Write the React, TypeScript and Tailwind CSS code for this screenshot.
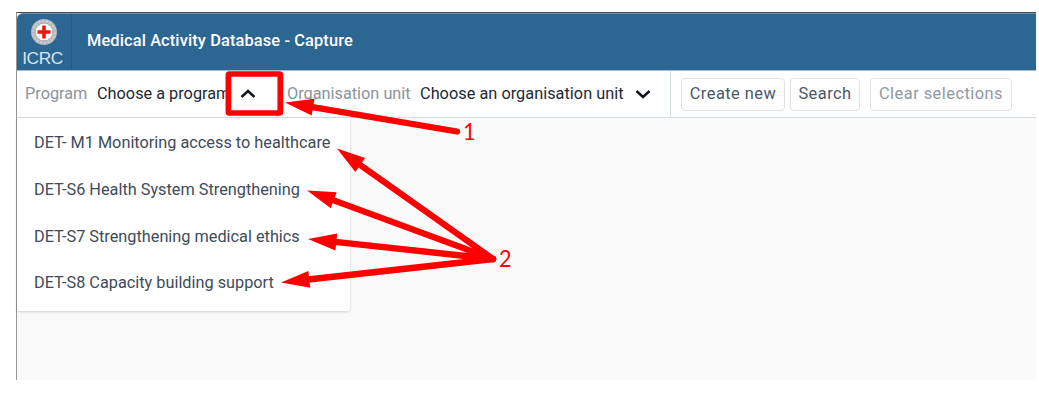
import React from 'react';

const programs = [
  'DET- M1 Monitoring access to healthcare',
  'DET-S6 Health System Strengthening',
  'DET-S7 Strengthening medical ethics',
  'DET-S8 Capacity building support',
];

const arrows = [
  { tip: [285, 102.5], end: [457, 131.5] },
  { tip: [337, 148.5], end: [493, 259] },
  { tip: [307, 190.5], end: [493, 259] },
  { tip: [308, 239], end: [493, 259] },
  { tip: [281, 282.5], end: [493, 259] },
];

function Arrow({ tip, end }: { tip: number[]; end: number[] }) {
  const dx = end[0] - tip[0];
  const dy = end[1] - tip[1];
  const len = Math.hypot(dx, dy);
  const angle = (Math.atan2(dy, dx) * 180) / Math.PI;
  return (
    <g transform={`translate(${tip[0]} ${tip[1]}) rotate(${angle})`}>
      <line x1="25" y1="0" x2={len} y2="0" stroke="#ff0000" strokeWidth="6.3" strokeLinecap="round" />
      <path d="M0 0L28.5 -8.5V8.5Z" fill="#ff0000" />
    </g>
  );
}

function Emblem() {
  return (
    <svg width="28" height="28" viewBox="0 0 28 28" className="block">
      <circle cx="14" cy="14" r="13" fill="#b5b9bc" />
      <circle cx="14" cy="14" r="11" fill="none" stroke="#dcdedf" strokeWidth="2.5" strokeDasharray="2.3 1.5" opacity=".5" />
      <circle cx="14" cy="14" r="8.8" fill="#fff" stroke="#9aa1a6" strokeWidth=".7" />
      <path d="M12.2 7.5h3.6v4.7h4.7v3.6h-4.7v4.7h-3.6v-4.7H7.5v-3.6h4.7z" fill="#ed1710" />
    </svg>
  );
}

function Chevron({ up = false }: { up?: boolean }) {
  return (
    <svg width="16" height="10" viewBox="0 0 16 10" fill="none" stroke="#15191f" strokeWidth="2.5">
      <path d={up ? 'M1.5 8L8 2L14.5 8' : 'M1.5 2L8 8L14.5 2'} />
    </svg>
  );
}

export default function App() {
  return (
    <div className="relative h-[401px] w-[1039px] overflow-hidden bg-white pl-4 pt-3 font-['Roboto',sans-serif] whitespace-nowrap">
      <div className="flex h-[368px] w-[1020px] flex-col border-l border-t border-l-[#969696] border-t-[#4c4c4c] bg-[#fafafa]">
        <div className="shrink-0 bg-white">
          <header className="flex h-[58px] rounded-tl-md border-t border-b border-t-[#6c91af] border-b-[#a3bdd1] bg-[#2c6693] text-white">
            <div className="flex w-[55px] flex-col items-center border-r border-[#245b86] pt-[4px]">
              <Emblem />
              <span className="mt-[2px] mr-[3px] font-['Liberation_Sans',sans-serif] text-[17.3px] leading-[20px] tracking-[-0.4px] text-[#d9e5ee]">ICRC</span>
            </div>
            <h1 className="pl-[15px] text-[16.4px] leading-[53px] font-medium tracking-[0.12px]">Medical Activity Database - Capture</h1>
          </header>
        </div>

        <div className="flex h-[47px] shrink-0 items-center border-b border-[#d5dde5] bg-white text-[16.3px]">
          <div className="flex h-full w-[261px] items-center border-r border-[#d5dde5] pl-[8px]">
            <span className="w-[72px] text-[#8b939c]">Program</span>
            <span className="w-[143px] text-[#212934]">Choose a program</span>
            <Chevron up />
          </div>
          <div className="flex h-full w-[393px] items-center border-r border-[#d5dde5] pl-[9px]">
            <span className="w-[133px] text-[#8b939c]">Organisation unit</span>
            <span className="w-[215px] tracking-[0.03px] text-[#212934]">Choose an organisation unit</span>
            <Chevron />
          </div>
          <div className="flex items-center pl-[10px] text-[16.4px] tracking-[0.47px] text-[#4a5768]">
            <button className="h-[33px] w-[104px] rounded border border-[#dfe3e7]">Create new</button>
            <button className="ml-[5px] h-[33px] w-[70px] rounded border border-[#dfe3e7]">Search</button>
            <button className="ml-[10px] h-[33px] w-[142px] rounded border border-[#dfe3e7] text-[#8f98a2]">Clear selections</button>
          </div>
        </div>

        <ul className="w-[333px] rounded-br bg-white pt-[1px] pb-[5px] text-[16.3px] text-[#404b5a] shadow-[0_1px_3px_rgba(0,0,0,0.17)]">
          {programs.map((name) => (
            <li key={name} className="h-[46.8px] pl-[17px] leading-[47.8px]">{name}</li>
          ))}
        </ul>
      </div>

      <svg className="pointer-events-none absolute inset-0" width="1039" height="401" viewBox="0 0 1039 401">
        <rect x="228.4" y="74" width="52" height="39" rx="1" fill="none" stroke="#ff0000" strokeWidth="5.7" />
        {arrows.map((arrow, index) => <Arrow key={index} {...arrow} />)}
      </svg>
      <span className="absolute left-[463px] top-[116px] origin-left scale-x-90 font-['Lato',sans-serif] text-[24px] leading-[30px] text-[#ff0000]">1</span>
      <span className="absolute left-[499px] top-[243px] origin-left scale-x-90 font-['Lato',sans-serif] text-[24px] leading-[30px] text-[#ff0000]">2</span>
    </div>
  );
}
